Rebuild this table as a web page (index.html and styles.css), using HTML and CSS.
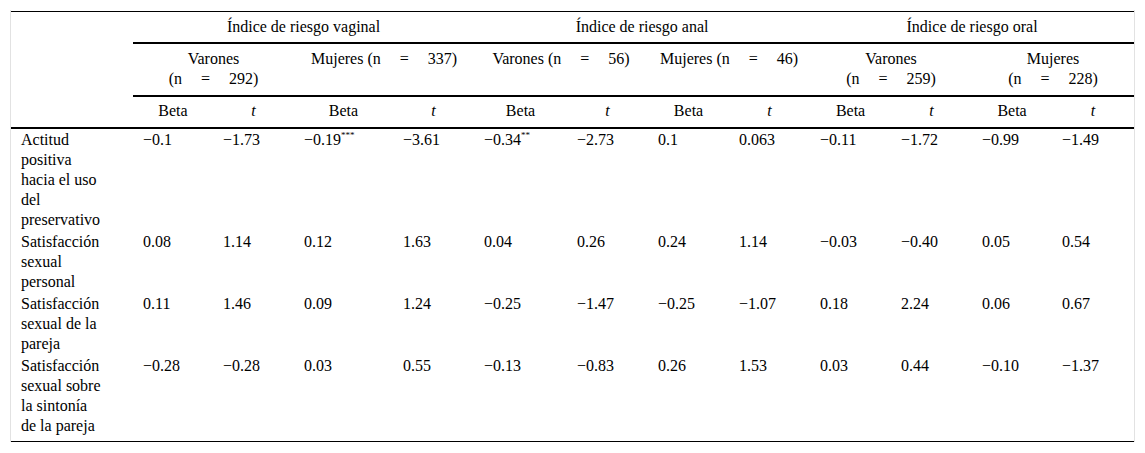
FILE: index.html
```html
<!DOCTYPE html>
<html lang="es">
<head>
<meta charset="utf-8">
<title>Tabla</title>
<link rel="stylesheet" href="styles.css">
</head>
<body>
<div class="wrap">
<table class="tbl">
<colgroup>
<col class="c0"><col class="c80"><col class="c81"><col class="c99"><col class="c81"><col class="c93"><col class="c81"><col class="c81"><col class="c81"><col class="c81"><col class="c81"><col class="c80"><col class="c82">
</colgroup>
<thead>
<tr class="h1">
<th rowspan="3" class="corner"></th>
<th colspan="4">Índice de riesgo vaginal</th>
<th colspan="4">Índice de riesgo anal</th>
<th colspan="4">Índice de riesgo oral</th>
</tr>
<tr class="h2">
<th colspan="2">Varones <span class="n">(n = 292)</span></th>
<th colspan="2">Mujeres <span class="n">(n = 337)</span></th>
<th colspan="2">Varones <span class="n">(n = 56)</span></th>
<th colspan="2">Mujeres <span class="n">(n = 46)</span></th>
<th colspan="2">Varones <span class="n">(n = 259)</span></th>
<th colspan="2">Mujeres <span class="n">(n = 228)</span></th>
</tr>
<tr class="h3">
<th>Beta</th><th><i>t</i></th>
<th>Beta</th><th><i>t</i></th>
<th>Beta</th><th><i>t</i></th>
<th>Beta</th><th><i>t</i></th>
<th>Beta</th><th><i>t</i></th>
<th>Beta</th><th><i>t</i></th>
</tr>
</thead>
<tbody>
<tr>
<td class="lbl">Actitud positiva hacia el uso del preservativo</td>
<td>−0.1</td><td>−1.73</td><td>−0.19<sup>***</sup></td><td>−3.61</td>
<td>−0.34<sup>**</sup></td><td>−2.73</td><td>0.1</td><td>0.063</td>
<td>−0.11</td><td>−1.72</td><td>−0.99</td><td>−1.49</td>
</tr>
<tr>
<td class="lbl">Satisfacción sexual personal</td>
<td>0.08</td><td>1.14</td><td>0.12</td><td>1.63</td>
<td>0.04</td><td>0.26</td><td>0.24</td><td>1.14</td>
<td>−0.03</td><td>−0.40</td><td>0.05</td><td>0.54</td>
</tr>
<tr>
<td class="lbl">Satisfacción sexual de la pareja</td>
<td>0.11</td><td>1.46</td><td>0.09</td><td>1.24</td>
<td>−0.25</td><td>−1.47</td><td>−0.25</td><td>−1.07</td>
<td>0.18</td><td>2.24</td><td>0.06</td><td>0.67</td>
</tr>
<tr class="last">
<td class="lbl">Satisfacción sexual sobre la sintonía de la pareja</td>
<td>−0.28</td><td>−0.28</td><td>0.03</td><td>0.55</td>
<td>−0.13</td><td>−0.83</td><td>0.26</td><td>1.53</td>
<td>0.03</td><td>0.44</td><td>−0.10</td><td>−1.37</td>
</tr>
</tbody>
</table>
</div>
</body>
</html>
```
FILE: styles.css
```css
html, body {
  margin: 0;
  padding: 0;
  background: #fff;
}
body {
  font-family: "Liberation Serif", "Times New Roman", serif;
  font-size: 16px;
  color: #000;
}
.wrap {
  margin: 10px 10px 0 10px;
  padding-top: 1px;
  width: 1123px;
  border-left: 1px solid #e2e2e2;
  border-right: 1px solid #e2e2e2;
}
.tbl {
  width: 1123px;
  table-layout: fixed;
  border-collapse: collapse;
  border-top: 1px solid #000;
  border-bottom: 1px solid #000;
  line-height: 20px;
}
.c0 { width: 122px; }
.c80 { width: 80px; }
.c81 { width: 81px; }
.c82 { width: 82px; }
.c93 { width: 93px; }
.c99 { width: 99px; }
.tbl th {
  font-weight: normal;
  text-align: center;
  vertical-align: top;
  padding: 5px 10px;
  border-bottom: 2px solid #000;
}
.n {
  white-space: nowrap;
  word-spacing: 15px;
}
.h2 th {
  padding: 5px 10px 6px;
}
.h3 th {
  padding: 4px 10px 6px;
}
.tbl td {
  vertical-align: top;
  text-align: left;
  padding: 1px 10px;
}
.tbl td.lbl {
  padding-right: 30px;
}
.last td {
  padding-bottom: 5px;
}
.tbl sup {
  font-size: 9px;
  line-height: 0;
  vertical-align: 7px;
}
```
